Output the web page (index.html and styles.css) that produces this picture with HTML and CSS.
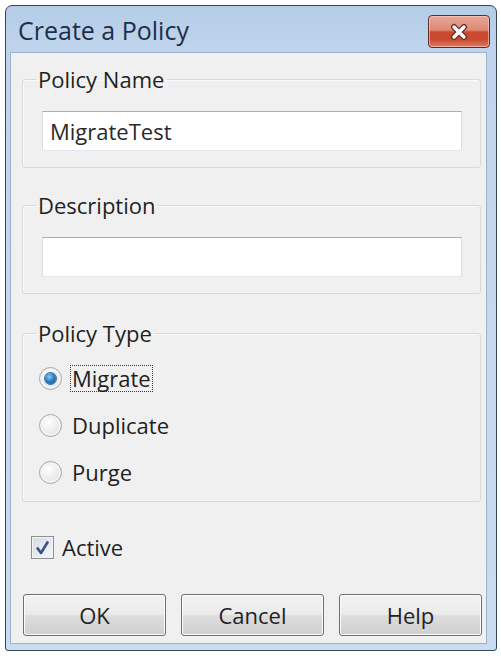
FILE: index.html
```html
<!DOCTYPE html>
<html lang="en">
<head>
    <meta charset="UTF-8">
    <title>Create a Policy</title>
    <link rel="stylesheet" href="styles.css">
</head>
<body>
    <div class="window">
        <div class="titlebar">
            <span class="title">Create a Policy</span>
            <button class="close" type="button" aria-label="Close">
                <svg width="22" height="18" viewBox="0 0 22 18">
                    <path d="M6 4 L16 14 M16 4 L6 14" stroke="#6a2a20" stroke-width="6" stroke-linecap="round" fill="none"/>
                    <path d="M6 4 L16 14 M16 4 L6 14" stroke="#ffffff" stroke-width="3.4" stroke-linecap="round" fill="none"/>
                </svg>
            </button>
        </div>
        <div class="client">
            <fieldset class="group">
                <legend>Policy Name</legend>
                <input class="field" type="text" value="MigrateTest">
            </fieldset>

            <fieldset class="group">
                <legend>Description</legend>
                <input class="field" type="text" value="">
            </fieldset>

            <fieldset class="group types">
                <legend>Policy Type</legend>
                <label class="option">
                    <span class="radio checked"></span>
                    <span class="caption focused">Migrate</span>
                </label>
                <label class="option">
                    <span class="radio"></span>
                    <span class="caption">Duplicate</span>
                </label>
                <label class="option">
                    <span class="radio"></span>
                    <span class="caption">Purge</span>
                </label>
            </fieldset>

            <label class="check">
                <span class="box">
                    <svg width="17" height="17" viewBox="0 0 17 17">
                        <path d="M3 8.5 L7 14 L14 2.5" stroke="#3d4f8c" stroke-width="2.6" fill="none" stroke-linejoin="round"/>
                    </svg>
                </span>
                <span class="caption">Active</span>
            </label>

            <div class="buttons">
                <button class="btn" type="button">OK</button>
                <button class="btn" type="button">Cancel</button>
                <button class="btn" type="button">Help</button>
            </div>
        </div>
    </div>
</body>
</html>
```

FILE: styles.css
```css
body {
    margin: 0;
    background: #fff;
    font-family: "Open Sans", "DejaVu Sans", sans-serif;
    color: #1f1f1f;
}
.window {
    margin: 5px 0 0 5px;
    width: 492px;
    height: 646px;
    box-sizing: border-box;
    border: 1px solid #33465a;
    border-radius: 7px 7px 3px 3px;
    background: linear-gradient(180deg, #b4cce7, #c0d5ed 46px, #c9dcf0);
    display: flex;
    flex-direction: column;
}
.titlebar {
    height: 46px;
    display: flex;
    justify-content: space-between;
    align-items: flex-start;
    padding: 0 6px 0 12px;
}
.title {
    font-size: 25px;
    line-height: 48px;
    color: #1d2f48;
}
.close {
    margin-top: 9px;
    width: 62px;
    height: 33px;
    padding: 0;
    border: 1px solid #5e2e27;
    border-radius: 4px;
    background: linear-gradient(180deg, #e9a696 0%, #dd8a76 45%, #c84a30 52%, #c9492f 75%, #df7c5e 100%);
    box-shadow: inset 0 0 0 1px rgba(255, 210, 200, 0.6);
    display: flex;
    align-items: center;
    justify-content: center;
}
.client {
    flex: 1;
    margin: 0 9px 6px 4px;
    background: #f0f0f0;
    border: 1px solid #9db1c9;
}
.group {
    margin: 14px 5px 0 11px;
    padding: 20px 17px 16px 13px;
    border: 1px solid #d9d9d9;
    border-radius: 3px;
    box-shadow: inset 1px 1px 0 #fafafa;
}
.group + .group {
    margin-top: 25px;
}
.group + .types {
    margin-top: 27px;
}
legend {
    padding: 0 2px;
    font-size: 22px;
    line-height: 24px;
}
.field {
    display: block;
    box-sizing: border-box;
    width: 420px;
    height: 40px;
    margin: 0 0 0 6px;
    padding: 0 7px;
    font-family: inherit;
    font-size: 22px;
    color: #2a2a2a;
    background: #fff;
    border: 1px solid #dbdfe6;
    border-top-color: #abadb3;
    border-bottom-color: #e3e9ef;
    outline: none;
}
.types {
    padding: 10px 17px 5px 13px;
}
.option {
    display: flex;
    align-items: center;
    height: 47px;
    padding-left: 3px;
    font-size: 22px;
}
.radio {
    width: 21px;
    height: 21px;
    border-radius: 50%;
    border: 1px solid #a8a8a8;
    background: radial-gradient(circle at 40% 35%, #ffffff 0%, #ebebeb 55%, #d4d4d4 100%);
    box-shadow: inset 0 0 0 2px #f4f4f4;
    display: flex;
    align-items: center;
    justify-content: center;
}
.radio.checked::after {
    content: "";
    width: 11px;
    height: 11px;
    border-radius: 50%;
    background: radial-gradient(circle at 40% 35%, #8fd0f5 0%, #2d7fc0 45%, #15457e 100%);
    box-shadow: 0 0 0 1px #3d6b98;
}
.option .caption {
    margin-left: 8px;
    padding: 0 1px;
    line-height: 25px;
    border: 1px solid transparent;
}
.option .focused {
    border: 1px dotted #3a3a3a;
}
.check {
    display: flex;
    align-items: center;
    height: 23px;
    margin: 34px 0 0 20px;
    font-size: 22px;
    line-height: 23px;
}
.box {
    width: 21px;
    height: 21px;
    border: 1px solid #8e8f8f;
    background: linear-gradient(135deg, #d4dae3, #f6f7f9);
    box-shadow: inset 0 0 0 1px #f4f4f4;
    display: flex;
    align-items: center;
    justify-content: center;
}
.check .caption {
    margin-left: 8px;
}
.buttons {
    display: flex;
    gap: 15px;
    margin: 35px 0 0 12px;
}
.btn {
    width: 143px;
    height: 42px;
    padding: 0;
    font-family: inherit;
    font-size: 22px;
    color: #222;
    border: 1px solid #707070;
    border-radius: 3px;
    background: linear-gradient(180deg, #f3f3f3 0%, #ebebeb 48%, #dddddd 52%, #cfcfcf 100%);
    box-shadow: inset 0 0 0 1px #fbfbfb;
}
```
